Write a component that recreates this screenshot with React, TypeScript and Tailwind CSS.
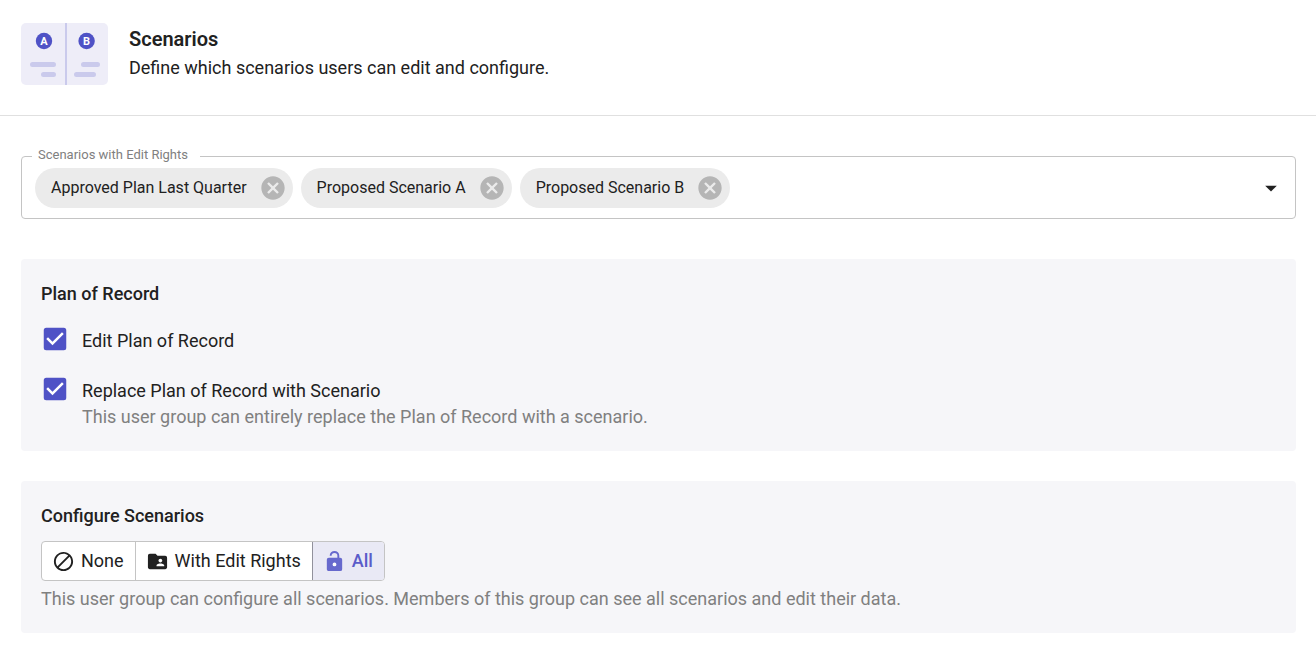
import React, { useState } from 'react';
import { MdArrowDropDown, MdCancel, MdCheckBox, MdCheckBoxOutlineBlank, MdDoNotDisturbAlt, MdFolderShared } from 'react-icons/md';

type ConfigureMode = 'none' | 'edit' | 'all';

interface CheckOptionProps {
  id: string;
  label: string;
  hint?: string;
  checked: boolean;
  onChange: (checked: boolean) => void;
}

const UnlockedIcon = ({ size }: { size: number }) => (
  <svg width={size} height={size} viewBox="0 0 24 24" fill="currentColor" opacity="0.9" aria-hidden="true">
    <circle cx="12" cy="15" r="3" fill="#fff" />
    <path d="M18,8A2,2 0 0,1 20,10V20A2,2 0 0,1 18,22H6C4.89,22 4,21.1 4,20V10A2,2 0 0,1 6,8H15V6A3,3 0 0,0 12,3A3,3 0 0,0 9,6H7A5,5 0 0,1 12,1A5,5 0 0,1 17,6V8H18M12,17A2,2 0 0,0 14,15A2,2 0 0,0 12,13A2,2 0 0,0 10,15A2,2 0 0,0 12,17Z" />
  </svg>
);

const MODES = [
  { id: 'none' as ConfigureMode, label: 'None', Icon: MdDoNotDisturbAlt },
  { id: 'edit' as ConfigureMode, label: 'With Edit Rights', Icon: MdFolderShared },
  { id: 'all' as ConfigureMode, label: 'All', Icon: UnlockedIcon },
];

const ScenariosArt = () => (
  <svg width="88" height="62" viewBox="0 0 88 62" className="shrink-0" aria-hidden="true">
    <rect width="87" height="62" rx="5" fill="#eeedf8" />
    <rect x="44" width="2" height="62" fill="#cacaec" />
    <circle cx="23" cy="18" r="8.2" fill="#4f52c6" />
    <circle cx="65.6" cy="18" r="8.2" fill="#4f52c6" />
    <text x="23" y="22" textAnchor="middle" fontSize="11" fontWeight="700" fill="#fff">A</text>
    <text x="65.6" y="22" textAnchor="middle" fontSize="11" fontWeight="700" fill="#fff">B</text>
    <g stroke="#cacaec" strokeWidth="5" strokeLinecap="round">
      <path d="M11.5 41.5H32.5M22.5 51.5H32.5M62.5 41.5H76.5M55.5 51.5H72.5" />
    </g>
  </svg>
);

const CheckOption: React.FC<CheckOptionProps> = ({ id, label, hint, checked, onChange }) => (
  <div className="flex items-start gap-3">
    <span className="-ml-px grid size-[30px] shrink-0">
      <input
        id={id}
        type="checkbox"
        checked={checked}
        onChange={(e) => onChange(e.target.checked)}
        aria-describedby={hint ? `${id}-hint` : undefined}
        className="col-start-1 row-start-1 m-1 cursor-pointer appearance-none rounded-sm bg-white"
      />
      <span className="pointer-events-none col-start-1 row-start-1 text-[#4f52c6]">
        {checked ? <MdCheckBox size={30} /> : <MdCheckBoxOutlineBlank size={30} />}
      </span>
    </span>
    <div className="pt-1">
      <label htmlFor={id} className="block cursor-pointer leading-[26px]">{label}</label>
      {hint && <p id={`${id}-hint`} className="leading-[26px] text-[#808080]">{hint}</p>}
    </div>
  </div>
);

const App: React.FC = () => {
  const [scenarios, setScenarios] = useState(['Approved Plan Last Quarter', 'Proposed Scenario A', 'Proposed Scenario B']);
  const [canEdit, setCanEdit] = useState(true);
  const [canReplace, setCanReplace] = useState(true);
  const [mode, setMode] = useState<ConfigureMode>('all');

  return (
    <div className="bg-white font-[Roboto,sans-serif] text-lg text-[#212121]">
      {/* Header */}
      <header className="flex items-start gap-5 border-b border-[#e0e0e0] pt-[23px] pr-5 pb-[30px] pl-[21px]">
        <ScenariosArt />
        <div>
          <h1 className="text-xl leading-8 font-semibold">Scenarios</h1>
          <p className="leading-[26px]">Define which scenarios users can edit and configure.</p>
        </div>
      </header>

      <main className="flex flex-col gap-[30px] pt-[31px] pr-5 pb-5 pl-[21px]">
        {/* Scenario picker */}
        <fieldset className="mb-2.5 rounded border border-[#c4c4c4] px-2.5 pt-[3px] pb-2.5">
          <legend className="pr-3 pb-0.5 pl-1.5 text-[13px] leading-4 text-[#808080]">Scenarios with Edit Rights</legend>
          <div className="flex items-center gap-2 pl-[3px]">
            <ul className="flex flex-1 flex-wrap gap-2">
              {scenarios.map((name) => (
                <li key={name} className="flex h-10 items-center gap-3 rounded-full bg-[#ebebeb] pr-1.5 pl-4 text-base">
                  {name}
                  <button
                    type="button"
                    aria-label={`Remove ${name}`}
                    onClick={() => setScenarios(scenarios.filter((s) => s !== name))}
                    className="cursor-pointer text-[#b5b5b5]"
                  >
                    <MdCancel size={28} />
                  </button>
                </li>
              ))}
            </ul>
            <button type="button" aria-label="Choose scenarios" aria-haspopup="listbox" className="cursor-pointer">
              <MdArrowDropDown size={28} />
            </button>
          </div>
        </fieldset>

        {/* Plan of Record */}
        <section className="rounded bg-[#f6f6f9] px-5 pt-5 pb-[21px]">
          <h2 className="leading-[30px] font-medium">Plan of Record</h2>
          <div className="mt-[15px] flex flex-col gap-5">
            <CheckOption id="edit-plan" label="Edit Plan of Record" checked={canEdit} onChange={setCanEdit} />
            <CheckOption
              id="replace-plan"
              label="Replace Plan of Record with Scenario"
              hint="This user group can entirely replace the Plan of Record with a scenario."
              checked={canReplace}
              onChange={setCanReplace}
            />
          </div>
        </section>

        {/* Configure Scenarios */}
        <section className="rounded bg-[#f6f6f9] px-5 pt-5 pb-[21px]">
          <h2 className="leading-[30px] font-medium">Configure Scenarios</h2>
          <div className="mt-2.5 flex w-fit overflow-hidden rounded border border-[#c4c4c4] bg-white">
            {MODES.map(({ id, label, Icon }) => (
              <button
                key={id}
                type="button"
                aria-pressed={mode === id}
                onClick={() => setMode(id)}
                className={`flex h-[38px] cursor-pointer items-center gap-1.5 pr-[11px] pl-2.5 not-first:border-l ${
                  mode === id ? 'border-[#91919c] bg-[#e9e9f5] font-medium text-[#5a5cc9]' : 'border-[#c4c4c4]'
                }`}
              >
                <Icon size={23} />
                {label}
              </button>
            ))}
          </div>
          <p className="mt-[5px] leading-[26px] text-[#808080]">
            This user group can configure all scenarios. Members of this group can see all scenarios and edit their data.
          </p>
        </section>
      </main>
    </div>
  );
};

export default App;
